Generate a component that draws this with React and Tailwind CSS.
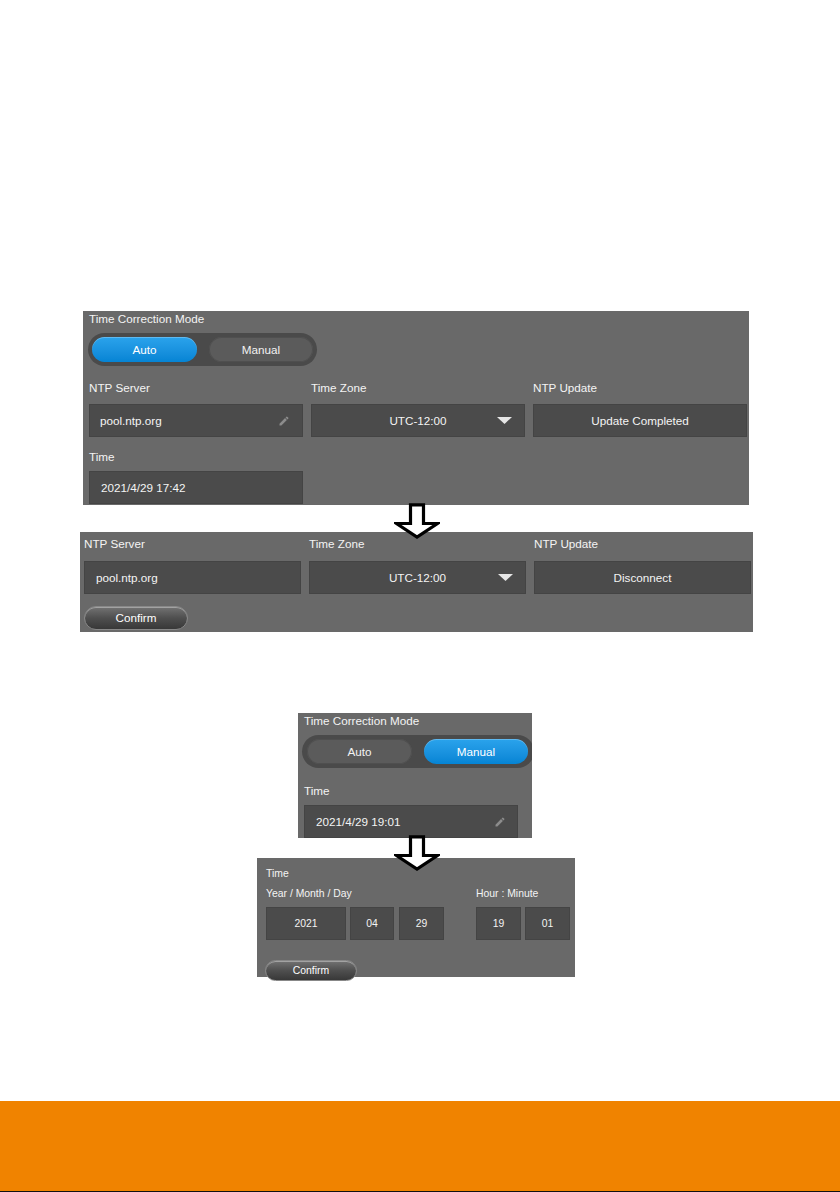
const font = { fontFamily: '"Liberation Sans", Arial, sans-serif' };

function EditIcon() {
  return (
    <svg width="12" height="12" viewBox="0 0 24 24" className="text-[#8c8c8c]">
      <path
        fill="currentColor"
        d="M3 17.25V21h3.75L17.81 9.94l-3.75-3.75L3 17.25zM20.71 7.04a1 1 0 000-1.41l-2.34-2.34a1 1 0 00-1.41 0l-1.83 1.83 3.75 3.75 1.83-1.83z"
      />
    </svg>
  );
}

function DownArrow() {
  return (
    <svg width="46" height="36" viewBox="0 0 46 36">
      <polygon
        points="16.5,1.8 29.5,1.8 29.5,20.5 43.5,20.5 23,34 2.5,20.5 16.5,20.5"
        fill="#fff"
        stroke="#000"
        strokeWidth="3.2"
        strokeLinejoin="miter"
      />
    </svg>
  );
}

function ModeToggle({ mode, className }) {
  const pill = (active) =>
    active
      ? 'bg-linear-to-b from-[#2aa3ec] to-[#0584d4] text-white shadow-[inset_0_1px_0_rgba(255,255,255,0.25)]'
      : 'bg-[#5b5b5b] text-[#f2f2f2] shadow-[inset_0_0_0_1px_#4f4f4f]';
  return (
    <div className={`flex h-[33px] items-center gap-[12px] rounded-full bg-[#4a4a4a] px-[4px] ${className}`}>
      <div className={`flex h-[25px] w-[105px] items-center justify-center rounded-full ${pill(mode === 'auto')}`}>Auto</div>
      <div className={`flex h-[25px] w-[104px] items-center justify-center rounded-full ${pill(mode === 'manual')}`}>Manual</div>
    </div>
  );
}

function Box({ children, className = '' }) {
  return (
    <div className={`flex h-[33px] items-center bg-[#4b4b4b] shadow-[inset_0_0_0_1px_#444] ${className}`}>{children}</div>
  );
}

function ZoneBox() {
  return (
    <Box className="relative justify-center">
      <span>UTC-12:00</span>
      <svg width="15" height="7" viewBox="0 0 15 7" className="absolute right-[13px] top-[13px]">
        <polygon points="0,0 15,0 7.5,7" fill="#e6e6e6" />
      </svg>
    </Box>
  );
}

function ConfirmButton({ className }) {
  return (
    <div
      className={`flex items-center justify-center rounded-full border border-[#888] bg-linear-to-b from-[#737373] via-[#4f4f4f] to-[#383838] text-white shadow-[inset_0_1px_0_rgba(255,255,255,0.35)] ${className}`}
    >
      Confirm
    </div>
  );
}

export default function App() {
  return (
    <div className="flex h-[1192px] w-[840px] flex-col bg-white pt-[311px] text-[#f4f4f4]" style={font}>
      {/* auto mode, NTP settings */}
      <div className="ml-[83px] h-[194px] w-[666px] bg-[#696969] text-[11.7px]">
        <div className="pl-[6px] leading-[15px]">Time Correction Mode</div>
        <ModeToggle mode="auto" className="ml-[5px] mt-[7px] w-[229px]" />
        <div className="ml-[6px] grid grid-cols-[214px_214px_214px] gap-x-[8px]">
          <div>
            <div className="mt-[14px] leading-[15px]">NTP Server</div>
            <Box className="mt-[9px] justify-between pl-[11px] pr-[13px]">
              <span>pool.ntp.org</span>
              <EditIcon />
            </Box>
          </div>
          <div>
            <div className="mt-[14px] leading-[15px]">Time Zone</div>
            <div className="mt-[9px]">
              <ZoneBox />
            </div>
          </div>
          <div>
            <div className="mt-[14px] leading-[15px]">NTP Update</div>
            <Box className="mt-[9px] justify-center">Update Completed</Box>
          </div>
        </div>
        <div className="ml-[6px] mt-[12px] leading-[15px]">Time</div>
        <Box className="ml-[6px] mt-[7px] w-[214px] pl-[12px]">2021/4/29 17:42</Box>
      </div>

      <div className="relative h-[27px]">
        <div className="absolute left-[394px] top-[-2px] z-10">
          <DownArrow />
        </div>
      </div>

      {/* NTP edit */}
      <div className="ml-[80px] h-[100px] w-[673px] bg-[#696969] pl-[4px] text-[11.7px]">
        <div className="grid grid-cols-[217px_217px_217px] gap-x-[8px]">
          <div>
            <div className="mt-[4px] leading-[15px]">NTP Server</div>
            <Box className="mt-[10px] pl-[12px]">pool.ntp.org</Box>
          </div>
          <div>
            <div className="mt-[4px] leading-[15px]">Time Zone</div>
            <div className="mt-[10px]">
              <ZoneBox />
            </div>
          </div>
          <div>
            <div className="mt-[4px] leading-[15px]">NTP Update</div>
            <Box className="mt-[10px] justify-center">Disconnect</Box>
          </div>
        </div>
        <ConfirmButton className="mt-[12px] h-[24px] w-[104px]" />
      </div>

      {/* manual mode */}
      <div className="ml-[298px] mt-[81px] h-[125px] w-[234px] overflow-hidden bg-[#696969] text-[11.7px]">
        <div className="pl-[6px] leading-[15px]">Time Correction Mode</div>
        <ModeToggle mode="manual" className="ml-[4px] mt-[7px] w-[232px] gap-[11px] pl-[5px]" />
        <div className="ml-[6px] mt-[15px] leading-[15px]">Time</div>
        <Box className="ml-[6px] mt-[7px] w-[214px] justify-between pl-[12px] pr-[12px]">
          <span>2021/4/29 19:01</span>
          <EditIcon />
        </Box>
      </div>

      <div className="relative h-[20px]">
        <div className="absolute left-[394px] top-[-3px] z-10">
          <DownArrow />
        </div>
      </div>

      {/* manual time edit */}
      <div className="ml-[257px] h-[119px] w-[318px] bg-[#696969] pl-[9px] text-[10.4px]">
        <div className="pt-[9px] leading-[13px]">Time</div>
        <div className="flex gap-[32px]">
          <div>
            <div className="mt-[7px] leading-[13px]">Year / Month / Day</div>
            <div className="mt-[7px] flex gap-[4px]">
              <Box className="h-[28px] w-[80px] justify-center">2021</Box>
              <Box className="h-[28px] w-[44px] justify-center">04</Box>
              <Box className="ml-[1px] h-[28px] w-[45px] justify-center">29</Box>
            </div>
          </div>
          <div>
            <div className="mt-[7px] leading-[13px]">Hour : Minute</div>
            <div className="mt-[7px] flex gap-[4px]">
              <Box className="h-[28px] w-[45px] justify-center">19</Box>
              <Box className="h-[28px] w-[45px] justify-center">01</Box>
            </div>
          </div>
        </div>
        <ConfirmButton className="-ml-[1px] mt-[20px] h-[21px] w-[92px]" />
      </div>

      <div className="mt-[124px] h-[90px] bg-[#f08300]" />
      <div className="h-[1px] bg-[#111]" />
    </div>
  );
}
